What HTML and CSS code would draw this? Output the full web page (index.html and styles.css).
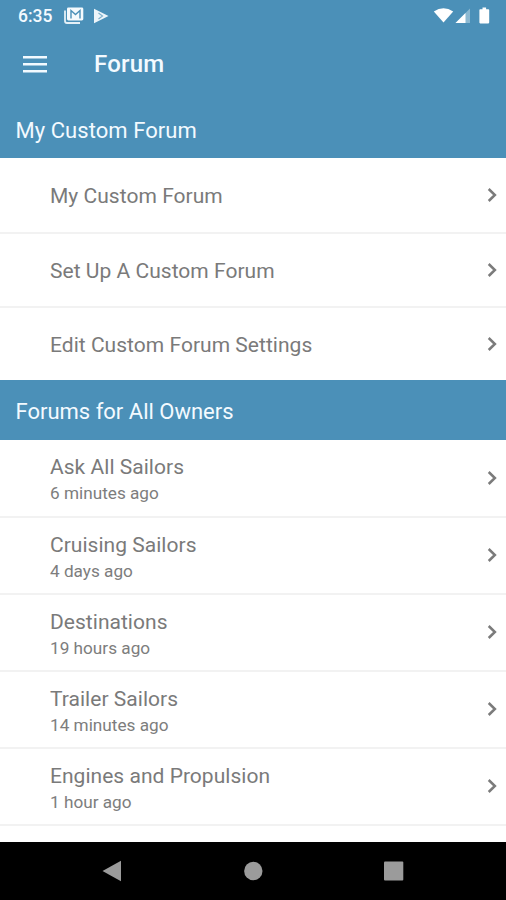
FILE: index.html
```html
<!DOCTYPE html>
<html lang="en">
<head>
<meta charset="utf-8">
<title>Forum</title>
<link rel="stylesheet" href="styles.css">
</head>
<body>
<svg width="0" height="0" class="defs"><symbol id="chevron" viewBox="0 0 10 16"><path d="M1.7 2 7.9 8 1.7 14" fill="none" stroke="#7b7b7b" stroke-width="2.5"/></symbol></svg>
<div class="screen">
  <div class="status">
    <span class="time">6:35</span>
    <svg class="mail" width="20" height="17" viewBox="0 0 20 17"><path d="M1 3.5V14q0 2 2 2H16" fill="none" stroke="#e4f0f7" stroke-width="1.8"/><rect x="3" y="0.5" width="16.3" height="13" rx="1.4" fill="#f5fafd"/><path d="M7 11.5V3.5l4.5 4 4.5-4v8" fill="none" stroke="#4b90b8" stroke-width="1.4"/></svg>
    <svg class="play" width="16" height="16" viewBox="0 0 16 16"><path d="M1 .8 15.5 8 1 15.2Z" fill="#edf5fa"/><path d="M5.5 5 9.5 8 5.5 11" fill="none" stroke="#7fb0cb" stroke-width="1.2"/></svg>
    <span class="spacer"></span>
    <svg class="signals" width="57" height="18" viewBox="0 0 57 18"><path d="M-.2 4.5Q9.5 -2 19.2 4.5L9.5 15.5Z" fill="#fff"/><path d="M36 1.5V16H21.5Z" fill="#8bb8d1"/><path d="M31.5 6V16H21.5Z" fill="#fff"/><path d="M46.2 2.2h2.3V.5h3.6v1.7h2.3q.8 0 .8.8v12.6q0 .8-.8.8h-8.2q-.8 0-.8-.8V3q0-.8.8-.8Z" fill="#fff"/></svg>
  </div>
  <header class="toolbar">
    <svg width="24" height="18" viewBox="0 0 24 18"><path d="M0 2.3h24M0 9.3h24M0 16.3h24" stroke="#f3faff" stroke-width="2.6"/></svg>
    <h1>Forum</h1>
  </header>
  <h2 class="section first">My Custom Forum</h2>
  <ul class="list single">
    <li><span class="name">My Custom Forum</span><svg class="chevron"><use href="#chevron"/></svg></li>
    <li><span class="name">Set Up A Custom Forum</span><svg class="chevron"><use href="#chevron"/></svg></li>
    <li><span class="name">Edit Custom Forum Settings</span><svg class="chevron"><use href="#chevron"/></svg></li>
  </ul>
  <h2 class="section">Forums for All Owners</h2>
  <ul class="list double">
    <li><div class="text"><div class="name">Ask All Sailors</div><div class="ago">6 minutes ago</div></div><svg class="chevron"><use href="#chevron"/></svg></li>
    <li><div class="text"><div class="name">Cruising Sailors</div><div class="ago">4 days ago</div></div><svg class="chevron"><use href="#chevron"/></svg></li>
    <li><div class="text"><div class="name">Destinations</div><div class="ago">19 hours ago</div></div><svg class="chevron"><use href="#chevron"/></svg></li>
    <li><div class="text"><div class="name">Trailer Sailors</div><div class="ago">14 minutes ago</div></div><svg class="chevron"><use href="#chevron"/></svg></li>
    <li><div class="text"><div class="name">Engines and Propulsion</div><div class="ago">1 hour ago</div></div><svg class="chevron"><use href="#chevron"/></svg></li>
  </ul>
  <nav class="nav">
    <svg width="20" height="22" viewBox="0 0 20 22"><path d="M.5 11 19 .7V21.3Z" fill="#9b9b9b"/></svg>
    <svg width="20" height="20" viewBox="0 0 20 20"><circle cx="10.3" cy="10" r="9.2" fill="#9b9b9b"/></svg>
    <svg width="20" height="20" viewBox="0 0 20 20"><rect x="0" y=".5" width="19.3" height="19" rx="1" fill="#9b9b9b"/></svg>
  </nav>
</div>
</body>
</html>
```
FILE: styles.css
```css
* { box-sizing: border-box; }
body { margin: 0; background: #fff; font-family: Roboto, "Liberation Sans", sans-serif; }
.defs { display: block; height: 0; }
.screen { display: flex; flex-direction: column; height: 900px; overflow: hidden; }
svg { display: block; flex: none; overflow: visible; }
.status { display: flex; align-items: center; height: 31px; padding: 0 15px 0 18px; background: #4b90b8; color: #f3faff; }
.time { width: 46px; font-size: 17.5px; font-weight: 500; }
.play { margin-left: 9px; }
.spacer { flex: 1; }
.toolbar { display: flex; align-items: center; height: 67px; padding: 0 0 1px 23px; background: #4b90b8; }
h1 { margin: 0 0 0 47px; font-size: 24px; line-height: 28px; font-weight: 500; color: #f3faff; letter-spacing: 0.2px; }
.section { display: flex; align-items: center; flex: none; height: 60px; margin: 0; padding: 2px 0 0 15.5px; background: #4b90b8; color: #f3faff; font-size: 22px; font-weight: 400; }
.section.first { padding-top: 4px; letter-spacing: 0.05px; }
.list { flex: none; margin: 0; padding: 0; list-style: none; }
li { display: flex; align-items: center; justify-content: space-between; padding: 0 9px 0 50px; border-bottom: 2px solid #f2f2f2; }
.single li { height: 74px; }
.single li:first-child { height: 76px; }
.single li:last-child { height: 72px; border-bottom: 0; }
.single .name { padding-top: 1px; }
.double { flex: 1; }
.double li { height: 77px; }
.double li:first-child { height: 78px; }
.text { padding-top: 2px; }
.double .chevron { margin-bottom: 1px; }
.name { font-size: 21px; line-height: 28px; font-weight: 400; color: #7a7a7a; letter-spacing: 0.03px; }
.ago { font-size: 17.2px; line-height: 24px; font-weight: 400; color: #7d7d7d; }
.chevron { width: 10px; height: 16px; }
.nav { display: flex; align-items: center; justify-content: center; gap: 121px; flex: none; height: 58px; background: #000; }
```
